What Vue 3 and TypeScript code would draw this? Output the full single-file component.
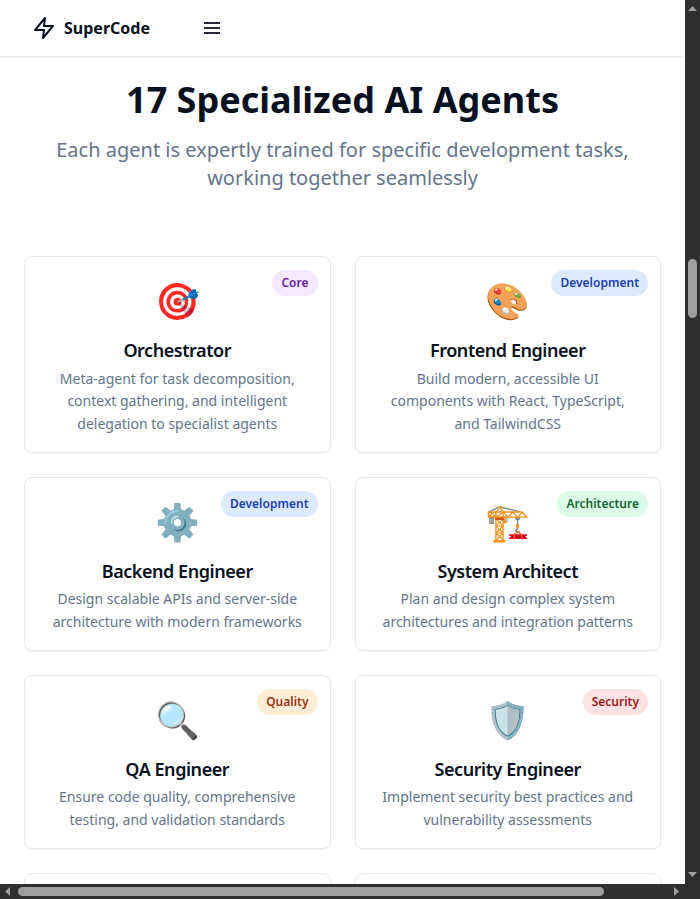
<script setup lang="ts">
interface Agent { icon: string; name: string; tag: string; lines: string[] }
const agents: Agent[] = [
  { icon: '🎯', name: 'Orchestrator', tag: 'Core', lines: ['Meta-agent for task decomposition,', 'context gathering, and intelligent', 'delegation to specialist agents'] },
  { icon: '🎨', name: 'Frontend Engineer', tag: 'Development', lines: ['Build modern, accessible UI', 'components with React, TypeScript,', 'and TailwindCSS'] },
  { icon: '⚙️', name: 'Backend Engineer', tag: 'Development', lines: ['Design scalable APIs and server-side', 'architecture with modern frameworks'] },
  { icon: '🏗️', name: 'System Architect', tag: 'Architecture', lines: ['Plan and design complex system', 'architectures and integration patterns'] },
  { icon: '🔍', name: 'QA Engineer', tag: 'Quality', lines: ['Ensure code quality, comprehensive', 'testing, and validation standards'] },
  { icon: '🛡️', name: 'Security Engineer', tag: 'Security', lines: ['Implement security best practices and', 'vulnerability assessments'] },
]
</script>

<template>
  <div class="window">
    <div class="page">
      <header class="nav">
        <svg class="bolt" viewBox="0 0 24 24"><path d="M13 2 3 14h9l-1 8 10-12h-9l1-8z" /></svg>
        <span class="brand">SuperCode</span>
        <svg class="menu" viewBox="0 0 16 16"><path d="M0 3h16M0 8h16M0 13h16" /></svg>
      </header>
      <main>
        <h1>17 Specialized AI Agents</h1>
        <p class="lead">Each agent is expertly trained for specific development tasks,<br />working together seamlessly</p>
        <div class="grid">
          <article v-for="a in agents" :key="a.name" class="card">
            <span class="tag" :class="a.tag.toLowerCase()">{{ a.tag }}</span>
            <div class="emoji">{{ a.icon }}</div>
            <h3>{{ a.name }}</h3>
            <p class="desc"><span v-for="l in a.lines" :key="l">{{ l }}</span></p>
          </article>
          <article class="card"></article>
          <article class="card"></article>
        </div>
      </main>
    </div>
    <div class="vbar">
      <svg class="arrow" viewBox="0 0 15 15"><path d="M3 11h9L7.500 6z" /></svg>
      <div class="vthumb"></div>
      <svg class="arrow" viewBox="0 0 15 15"><path d="M3 3h9L7.500 8z" /></svg>
    </div>
    <div class="hbar">
      <svg class="arrow" viewBox="0 0 15 15"><path d="M10 3v9L5 7.500z" /></svg>
      <div class="hthumb"></div>
      <svg class="arrow" viewBox="0 0 15 15"><path d="M4 3v9l5-4.500z" /></svg>
    </div>
    <div class="corner"></div>
  </div>
</template>

<style>
body { margin: 0; overflow: hidden; }
</style>
<style scoped>
* { box-sizing: border-box; }
.window { width: 700px; height: 899px; display: grid; grid-template: 884px 15px / 685px 15px; font-family: "Noto Sans", sans-serif; color: #06101e; overflow: hidden; }
.page { overflow: hidden; background: #fff; }
.nav { height: 57px; border-bottom: 1px solid #e2e8f0; display: flex; align-items: center; padding-left: 32px; box-shadow: 0 1px 2px rgba(0,0,0,.05); }
.bolt { width: 24px; height: 24px; margin-right: 8px; fill: none; stroke: currentColor; stroke-width: 2; stroke-linecap: round; stroke-linejoin: round; }
.brand { font-size: 16px; font-weight: 700; line-height: 24px; width: 140px; }
.menu { width: 16px; height: 16px; fill: none; stroke: #2a2c3c; stroke-width: 2; }
main { padding: 23px 24px 0; }
h1 { margin: 0; font-size: 36px; line-height: 40px; font-weight: 700; text-align: center; white-space: nowrap; }
.lead { margin: 16px 0 64px; font-size: 20px; line-height: 28px; color: #64748b; text-align: center; white-space: nowrap; }
.grid { display: grid; grid-template-columns: 1fr 1fr; gap: 24px; }
.card { position: relative; border: 1px solid #e2e8f0; border-radius: 8px; box-shadow: 0 1px 2px rgba(0,0,0,.05); padding: 24px 24px 16px; text-align: center; min-height: 100px; }
.tag { position: absolute; top: 13px; right: 12px; height: 26px; padding: 0 9px; border-radius: 13px; font-size: 12px; line-height: 26px; font-weight: 600; }
.core { background: #f3e8ff; color: #6b21a8; }
.development { background: #dbeafe; color: #1e40af; }
.architecture { background: #dcfce7; color: #166534; }
.quality { background: #ffedd5; color: #9a3412; }
.security { background: #fee2e2; color: #991b1b; }
.emoji { font-size: 36px; line-height: 40px; height: 40px; margin-bottom: 15px; }
h3 { margin: 0 0 3.5px; font-size: 18px; line-height: 28px; font-weight: 600; letter-spacing: -.45px; white-space: nowrap; }
.desc { margin: 0; font-size: 14px; line-height: 22.75px; color: #64748b; }
.desc span { display: block; white-space: nowrap; }
.vbar, .hbar, .corner { background: #2f2f2f; }
.vbar, .hbar { display: flex; align-items: center; }
.vbar { flex-direction: column; }
.arrow { width: 15px; height: 15px; fill: #9f9f9f; flex: none; }
.vthumb { width: 9px; height: 59px; margin: 244px 0 auto; border-radius: 5px; background: #9f9f9f; }
.hthumb { height: 9px; width: 586px; margin: 0 auto 0 3px; border-radius: 5px; background: #9f9f9f; }
</style>
